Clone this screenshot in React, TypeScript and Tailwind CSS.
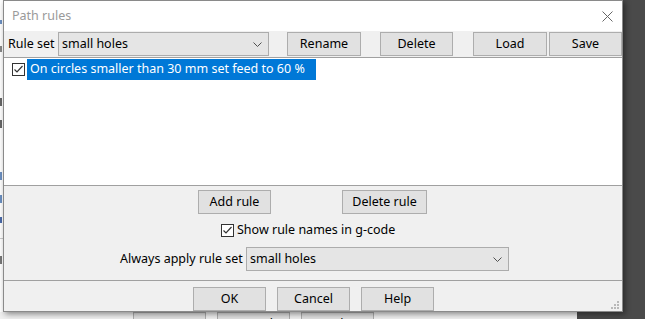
import React from 'react';

const font = { fontFamily: '"Noto Sans", "Open Sans", Arial, sans-serif' };

function Chevron() {
  return (
    <svg width="9" height="5" viewBox="0 0 9 5" className="shrink-0">
      <path d="M0.5 0.5 L4.5 4.5 L8.5 0.5" fill="none" stroke="#505050" strokeWidth="1" />
    </svg>
  );
}

function Check() {
  return (
    <svg width="13" height="13" viewBox="0 0 13 13" className="shrink-0">
      <rect x="0.5" y="0.5" width="12" height="12" fill="#fff" stroke="#333" />
      <path d="M2.5 6.5 L5 9 L10.5 3" fill="none" stroke="#333" strokeWidth="1.2" />
    </svg>
  );
}

function Btn({ label, w, className = '' }: { label: string; w: string; className?: string }) {
  return (
    <div
      className={`${w} h-[24px] flex items-center justify-center bg-[#e1e1e1] border border-[#adadad] text-black shrink-0 ${className}`}
    >
      {label}
    </div>
  );
}

function Combo({ value, w }: { value: string; w: string }) {
  return (
    <div className={`${w} h-[24px] flex items-center justify-between bg-[#e5e5e5] border border-[#acacac] pl-[3px] pr-[6px] shrink-0`}>
      <span>{value}</span>
      <Chevron />
    </div>
  );
}

export default function App() {
  return (
    <div className="relative w-[645px] h-[319px] overflow-hidden bg-[#4a4a4a]" style={font}>
      {/* window behind the dialog */}
      <div className="absolute left-0 top-0 w-[577px] h-[319px] bg-white">
        <div className="absolute left-0 top-[20px] w-[2px] h-[4px] bg-[#6b8fc0]" />
        <div className="absolute left-0 top-[46px] w-[2px] h-[6px] bg-[#888]" />
        <div className="absolute left-0 top-[98px] w-[2px] h-[8px] bg-[#666]" />
        <div className="absolute left-0 top-[120px] w-[2px] h-[8px] bg-[#666]" />
        <div className="absolute left-0 top-[172px] w-[2px] h-[8px] bg-[#6b8fc0]" />
        <div className="absolute left-0 top-[195px] w-[2px] h-[8px] bg-[#6b8fc0]" />
        <div className="absolute left-0 top-[217px] w-[2px] h-[6px] bg-[#4a6aa8]" />
        <div className="absolute left-0 top-[238px] w-[3px] h-px bg-[#ccc]" />
        <div className="absolute left-0 top-[256px] w-[2px] h-[8px] bg-[#777]" />
        <div className="absolute left-0 top-[312px] w-[577px] h-[7px] bg-[#f0f0f0]" />
        <div className="absolute left-[133px] top-[312px] flex gap-[11px] text-[12.5px]">
          {['OK', 'Cancel', 'Help'].map((t) => (
            <div key={t} className="w-[73px] h-[24px] bg-[#e1e1e1] border border-[#adadad] flex justify-center pt-[2px]">
              {t}
            </div>
          ))}
        </div>
      </div>

      {/* dialog */}
      <div className="absolute left-[3px] top-0 w-[620px] h-[312px] flex flex-col bg-[#f0f0f0] border border-[#8a8a8a] shadow-[2px_2px_6px_rgba(0,0,0,0.45)] text-[12.5px] text-black">
        <div className="h-[30px] bg-white flex items-center justify-between pl-[8px] pr-[9px]">
          <span className="text-[#9a9a9a]">Path rules</span>
          <svg width="11" height="11" viewBox="0 0 11 11">
            <path d="M0.5 0.5 L10.5 10.5 M10.5 0.5 L0.5 10.5" stroke="#666" strokeWidth="1" />
          </svg>
        </div>

        <div className="h-[26px] flex items-center pl-[4px]">
          <span className="w-[50px] shrink-0">Rule set</span>
          <Combo value="small holes" w="w-[211px]" />
          <Btn label="Rename" w="w-[74px]" className="ml-[18px]" />
          <Btn label="Delete" w="w-[73px]" className="ml-[19px]" />
          <Btn label="Load" w="w-[74px]" className="ml-[20px]" />
          <Btn label="Save" w="w-[73px]" className="ml-[2px]" />
        </div>

        <div className="h-[129px] bg-white border-t border-b border-[#a0a0a0] pt-[1px] pl-[8px]">
          <div className="flex items-center h-[21px]">
            <Check />
            <span className="ml-[2px] bg-[#0078d7] text-white h-[21px] flex items-center pl-[3px] pr-[11px]">
              On circles smaller than 30 mm set feed to 60 %
            </span>
          </div>
        </div>

        <div className="flex pt-[4px] pl-[194px]">
          <Btn label="Add rule" w="w-[73px]" />
          <Btn label="Delete rule" w="w-[85px]" className="ml-[71px]" />
        </div>

        <div className="flex items-center h-[13px] mt-[10px] pl-[217px] gap-[3px]">
          <Check />
          <span>Show rule names in g-code</span>
        </div>

        <div className="flex items-center mt-[10px] pl-[116px]">
          <span className="w-[126px] shrink-0">Always apply rule set</span>
          <Combo value="small holes" w="w-[263px]" />
        </div>

        <div className="mt-[9px] border-t border-[#a0a0a0] flex-1 relative">
          <div className="flex pt-[6px] pl-[189px] gap-[11px]">
            <Btn label="OK" w="w-[73px]" />
            <Btn label="Cancel" w="w-[73px]" />
            <Btn label="Help" w="w-[73px]" />
          </div>
          <svg width="8" height="8" viewBox="0 0 8 8" className="absolute right-[3px] bottom-[2px]">
            <rect x="6" y="0" width="2" height="2" fill="#b8b8b8" />
            <rect x="3" y="3" width="2" height="2" fill="#b8b8b8" />
            <rect x="6" y="3" width="2" height="2" fill="#b8b8b8" />
            <rect x="0" y="6" width="2" height="2" fill="#b8b8b8" />
            <rect x="3" y="6" width="2" height="2" fill="#b8b8b8" />
            <rect x="6" y="6" width="2" height="2" fill="#b8b8b8" />
          </svg>
        </div>
      </div>
    </div>
  );
}
